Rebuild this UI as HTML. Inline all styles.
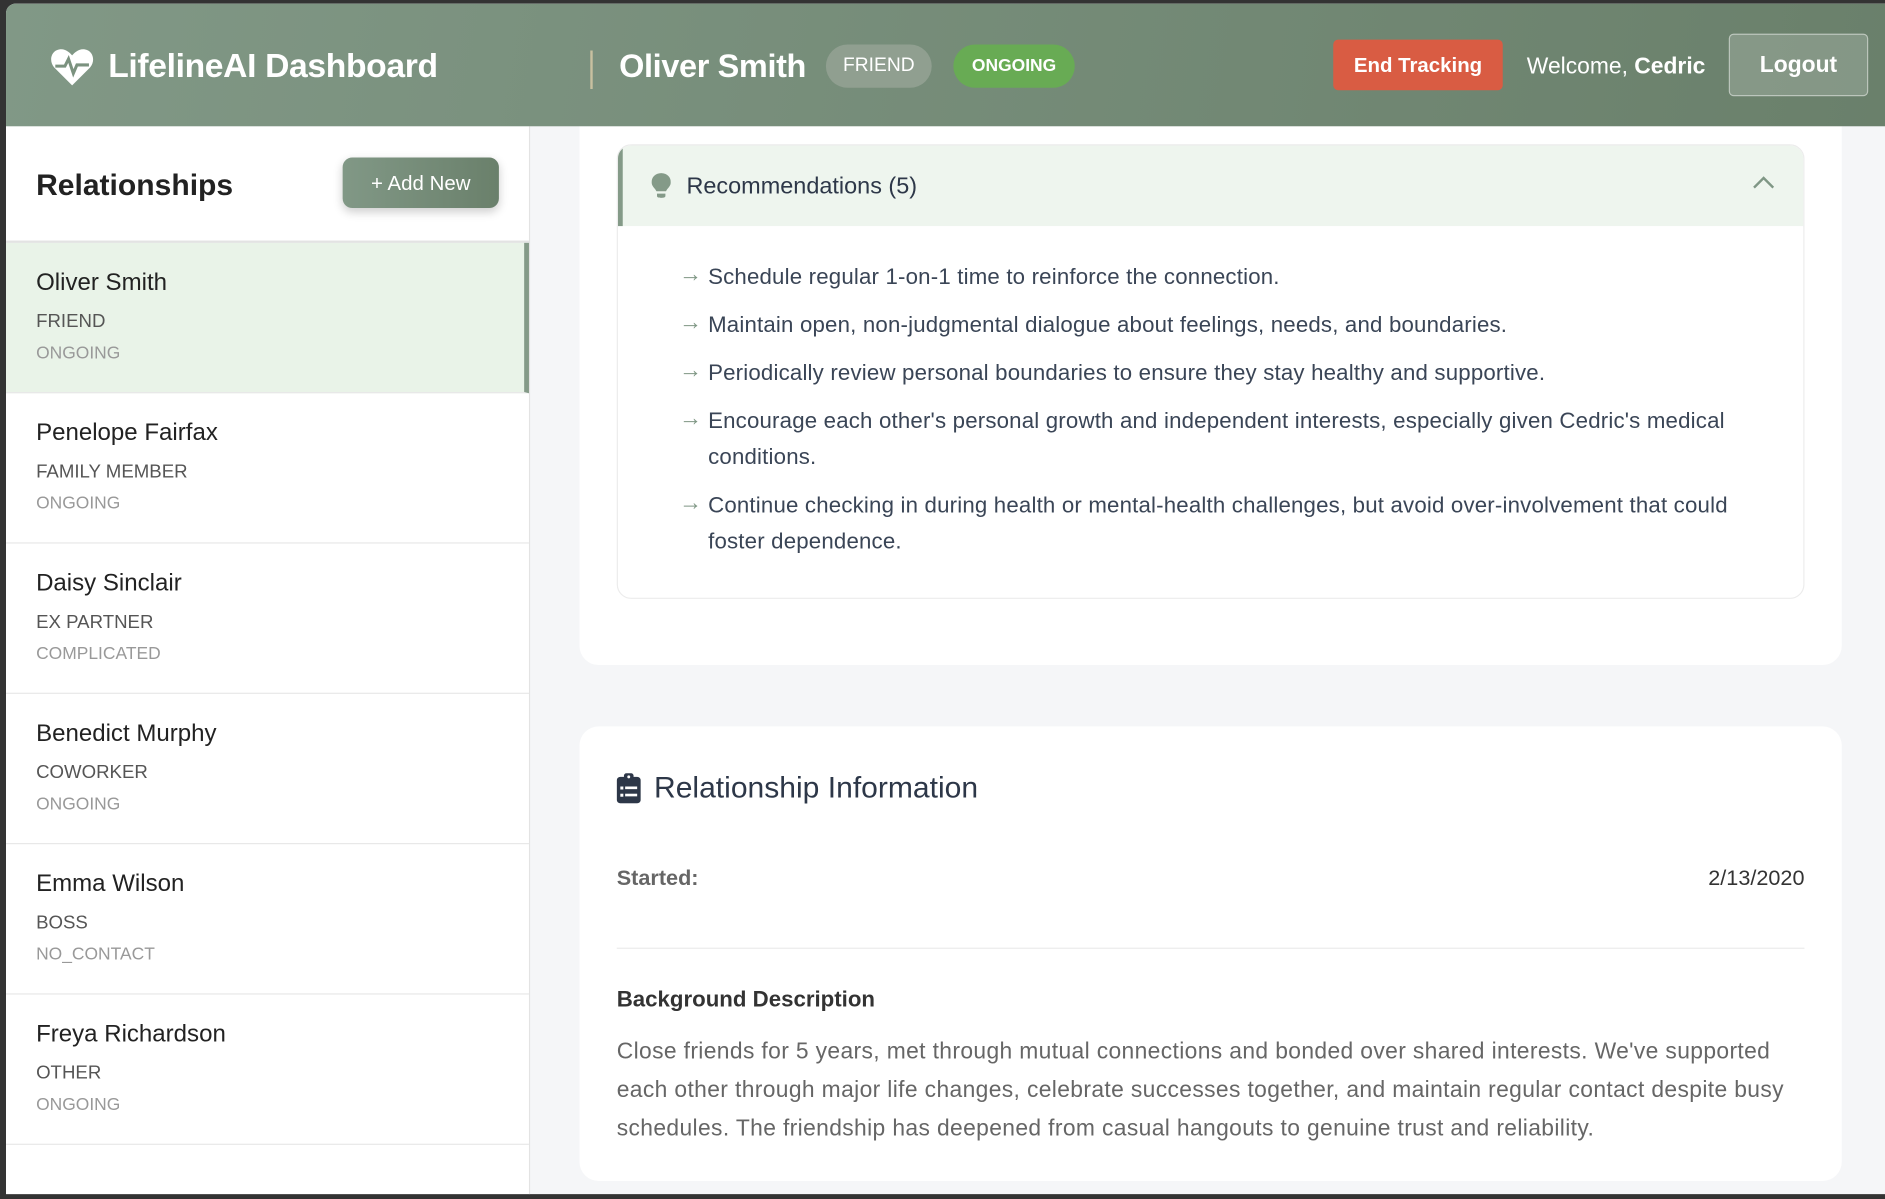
<!DOCTYPE html>
<html><head><meta charset="utf-8"><style>
html,body{margin:0;padding:0;width:1885px;height:1199px;overflow:hidden;background:#333;}
#w{position:absolute;left:0;top:0;width:1568px;height:997px;transform:scale(1.2022,1.2026);transform-origin:0 0;background:#333;font-family:"Liberation Sans",sans-serif;}
.abs{position:absolute;}
#app{position:absolute;left:5px;top:3px;width:1563px;height:990px;background:#f5f6f8;border-top-left-radius:8px;overflow:hidden;}
#hdr{position:absolute;left:0;top:0;width:1563px;height:102px;background:linear-gradient(100deg,#819886,#6a806b);color:#fff;z-index:5;}
.pill{position:absolute;top:34px;height:36px;border-radius:18px;font-size:16px;line-height:36px;text-align:center;}
#side{position:absolute;left:0;top:102px;width:435px;height:888px;background:#fff;border-right:1px solid #e3e3e3;}
.it{position:absolute;left:0;width:435px;height:124px;border-bottom:1px solid #e8e8e8;}
.it .n{position:absolute;left:25px;top:22px;font-size:20px;color:#222;}
.it .t{position:absolute;left:25px;top:57px;font-size:15.5px;color:#555;}
.it .s{position:absolute;left:25px;top:84px;font-size:14.5px;color:#999;}
.card{position:absolute;left:477px;width:1050px;background:#fff;border-radius:16px;}
.li{position:absolute;left:75px;width:900px;font-size:18.5px;color:#3a4556;line-height:30px;letter-spacing:0.15px;}
.li:before{content:"→";position:absolute;left:-24px;top:-1px;color:#7f9785;font-size:19px;}
</style></head><body><div id="w">
<div id="app">
 <div id="hdr">
  <svg class="abs" style="left:37px;top:37px" width="36" height="32" viewBox="0 0 36 32"><path d="M18 31 L3 16 C-2 10 1 1 9 1 C13 1 16 4 18 6 C20 4 23 1 27 1 C35 1 38 10 33 16 Z" fill="#fff"/><path d="M4 15 H12 L15 9 L19 21 L22 14 H32" stroke="#7b927f" stroke-width="2.5" fill="none"/></svg>
  <div class="abs" style="left:85px;top:36px;font-size:28px;font-weight:bold;letter-spacing:-0.3px">LifelineAI Dashboard</div>
  <div class="abs" style="left:486px;top:39px;width:2px;height:32px;background:#c8c0a0"></div>
  <div class="abs" style="left:510px;top:37px;font-size:27px;font-weight:bold;letter-spacing:-0.3px">Oliver Smith</div>
  <div class="pill" style="left:682px;width:88px;background:#909f90;">FRIEND</div>
  <div class="pill" style="left:788px;width:101px;background:#68ab54;font-size:14.5px;font-weight:bold">ONGOING</div>
  <div class="abs" style="left:1104px;top:30px;width:141px;height:42px;background:#d95c43;border-radius:4px;font-size:17px;font-weight:bold;line-height:44px;text-align:center">End Tracking</div>
  <div class="abs" style="left:1265px;top:42px;font-size:19px">Welcome, <b>Cedric</b></div>
  <div class="abs" style="left:1433px;top:25px;width:114px;height:50px;background:rgba(255,255,255,.18);border:1px solid rgba(255,255,255,.45);border-radius:4px;font-size:19px;font-weight:bold;line-height:52px;text-align:center">Logout</div>
 </div>
 <div id="side">
  <div class="abs" style="left:25px;top:35px;font-size:25px;font-weight:bold;color:#222">Relationships</div>
  <div class="abs" style="left:280px;top:26px;width:130px;height:42px;border-radius:8px;background:linear-gradient(90deg,#819886,#6a806b);color:#fff;font-size:17px;line-height:44px;text-align:center;box-shadow:0 3px 8px rgba(0,0,0,.2)">+ Add New</div>
  <div class="abs" style="left:0;top:95px;width:435px;height:2px;background:#e3e3e3"></div>
  <div class="it" style="top:97px;background:#e9f3e8;border-right:4px solid #849a88;width:431px"><div class="n">Oliver Smith</div><div class="t">FRIEND</div><div class="s">ONGOING</div></div>
  <div class="it" style="top:222px"><div class="n">Penelope Fairfax</div><div class="t">FAMILY MEMBER</div><div class="s">ONGOING</div></div>
  <div class="it" style="top:347px"><div class="n">Daisy Sinclair</div><div class="t">EX PARTNER</div><div class="s">COMPLICATED</div></div>
  <div class="it" style="top:472px"><div class="n">Benedict Murphy</div><div class="t">COWORKER</div><div class="s">ONGOING</div></div>
  <div class="it" style="top:597px"><div class="n">Emma Wilson</div><div class="t">BOSS</div><div class="s">NO_CONTACT</div></div>
  <div class="it" style="top:722px"><div class="n">Freya Richardson</div><div class="t">OTHER</div><div class="s">ONGOING</div></div>
 </div>
 <div class="card" style="top:60px;height:490px">
  <div class="abs" style="left:31px;top:57px;width:986px;height:376px;border:1px solid #ececec;border-radius:12px;overflow:hidden">
   <div class="abs" style="left:0;top:0;width:986px;height:67px;background:#eef5ee;border-left:4px solid #849a88"></div>
   <svg class="abs" style="left:28px;top:22px" width="16" height="22" viewBox="0 0 16 22"><path d="M8 1 C3 1 0 4.5 0 8.5 C0 12 3 13.5 4 16 H12 C13 13.5 16 12 16 8.5 C16 4.5 13 1 8 1Z M4.5 18 H11.5 V20 C11.5 21 10.5 21.5 8 21.5 C5.5 21.5 4.5 21 4.5 20Z" fill="#849a88"/></svg>
   <div class="abs" style="left:57px;top:23px;font-size:19.5px;color:#2d3748">Recommendations (5)</div>
   <svg class="abs" style="left:943px;top:25px" width="20" height="12" viewBox="0 0 20 12"><path d="M2 10 L10 2 L18 10" stroke="#7f9785" stroke-width="2" fill="none"/></svg>
   <div class="li" style="top:94px">Schedule regular 1-on-1 time to reinforce the connection.</div>
   <div class="li" style="top:134px">Maintain open, non-judgmental dialogue about feelings, needs, and boundaries.</div>
   <div class="li" style="top:174px">Periodically review personal boundaries to ensure they stay healthy and supportive.</div>
   <div class="li" style="top:214px">Encourage each other's personal growth and independent interests, especially given Cedric's medical conditions.</div>
   <div class="li" style="top:284px">Continue checking in during health or mental-health challenges, but avoid over-involvement that could foster dependence.</div>
  </div>
 </div>
 <div class="card" style="top:601px;height:378px">
  <svg class="abs" style="left:31px;top:38px" width="20" height="26" viewBox="0 0 20 26"><rect x="0" y="4" width="20" height="22" rx="3" fill="#2d3748"/><rect x="6" y="1" width="8" height="6" rx="2" fill="#2d3748"/><circle cx="10" cy="4" r="1.2" fill="#fff"/><rect x="3" y="12" width="2.5" height="2.5" fill="#fff"/><rect x="7" y="12" width="10" height="2.2" fill="#fff"/><rect x="3" y="18" width="2.5" height="2.5" fill="#fff"/><rect x="7" y="18" width="10" height="2.2" fill="#fff"/></svg>
  <div class="abs" style="left:62px;top:37px;font-size:25px;color:#2d3748">Relationship Information</div>
  <div class="abs" style="left:31px;top:116px;font-size:18px;color:#666;font-weight:bold">Started:</div>
  <div class="abs" style="right:31px;top:116px;font-size:18px;color:#333">2/13/2020</div>
  <div class="abs" style="left:31px;top:184px;width:988px;height:1px;background:#ececec"></div>
  <div class="abs" style="left:31px;top:216px;font-size:18.5px;color:#333;font-weight:bold">Background Description</div>
  <div class="abs" style="left:31px;top:255px;width:985px;font-size:19px;color:#666;line-height:32px;letter-spacing:0.3px">Close friends for 5 years, met through mutual connections and bonded over shared interests. We've supported each other through major life changes, celebrate successes together, and maintain regular contact despite busy schedules. The friendship has deepened from casual hangouts to genuine trust and reliability.</div>
 </div>
</div>
</div></body></html>
